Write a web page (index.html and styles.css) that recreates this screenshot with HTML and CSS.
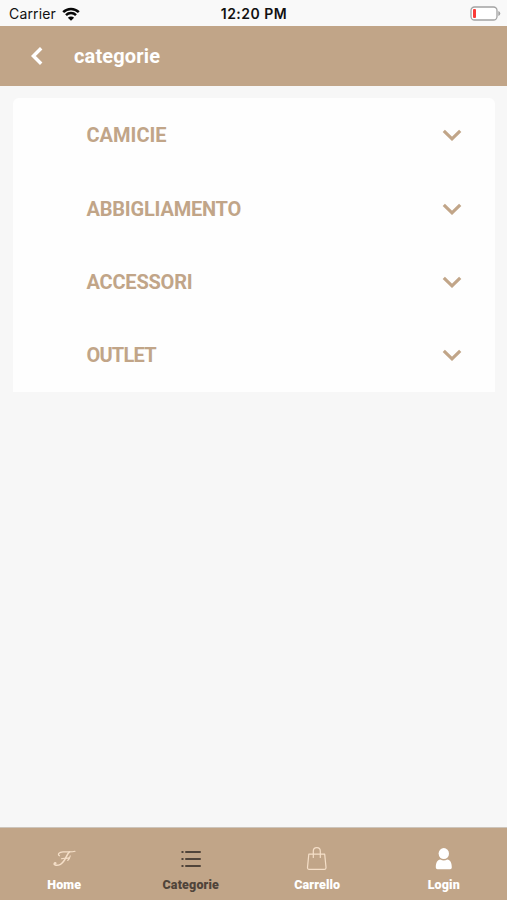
FILE: index.html
```html
<!DOCTYPE html>
<html lang="it">
<head>
    <meta charset="UTF-8">
    <meta name="viewport" content="width=device-width, initial-scale=1.0">
    <title>categorie</title>
    <link rel="stylesheet" href="styles.css">
</head>
<body>
    <div class="status-bar">
        <div class="carrier">
            <span>Carrier</span>
            <svg class="wifi" viewBox="0 0 18 14">
                <path d="M1.2 5.2a11 11 0 0 1 15.6 0M4 8.1a7.1 7.1 0 0 1 10 0" fill="none" stroke="#080808" stroke-width="2.5"/>
                <path d="M9 13.8L5.9 10.7a4.4 4.4 0 0 1 6.2 0z" fill="#080808"/>
            </svg>
        </div>
        <div class="clock">12:20 PM</div>
        <svg class="battery" viewBox="0 0 31 15">
            <rect x="1" y="1" width="26" height="13" rx="3.5" fill="#fff" stroke="#a3a3a3" stroke-width="1.3"/>
            <rect x="3" y="3" width="3" height="9" rx="1" fill="#fa3a36"/>
            <path d="M28.3 5v5q2-.7 2-2.5t-2-2.5z" fill="#a3a3a3"/>
        </svg>
    </div>

    <header class="header">
        <a href="#" class="back-link" aria-label="Indietro">
            <svg viewBox="0 0 12 18"><path d="M10.2 1.2L2.400 9l7.800 7.800"/></svg>
        </a>
        <h1>categorie</h1>
    </header>

    <main class="content">
        <ul class="category-list">
            <li class="category">
                <span>CAMICIE</span>
                <svg class="chevron" viewBox="0 0 20 12"><path d="M1.8 1.8L10 9.8l8.2-8"/></svg>
            </li>
            <li class="category">
                <span class="snug">ABBIGLIAMENTO</span>
                <svg class="chevron" viewBox="0 0 20 12"><path d="M1.8 1.8L10 9.8l8.2-8"/></svg>
            </li>
            <li class="category">
                <span class="snug">ACCESSORI</span>
                <svg class="chevron" viewBox="0 0 20 12"><path d="M1.8 1.8L10 9.8l8.2-8"/></svg>
            </li>
            <li class="category">
                <span class="tight">OUTLET</span>
                <svg class="chevron" viewBox="0 0 20 12"><path d="M1.8 1.8L10 9.8l8.2-8"/></svg>
            </li>
        </ul>
    </main>

    <nav class="tab-bar">
        <a href="#" class="tab">
            <svg viewBox="0 0 26 26" fill="none" stroke="#f5dfc8" stroke-linecap="round">
                <path d="M8.5 9.8C6.2 8.7 7.8 6 12 5.8c4.5-.2 8 .7 12-.5" stroke-width="1.2"/>
                <path d="M18.500 5.800C15.500 8 14.500 15.800 9.500 18.300c-3.200 1.600-7.200 1.200-6.200-1 .5-1 1.700-.7 1.500.1" stroke-width="1.500"/>
                <path d="M10.500 12.800c2.700-1.200 5 .4 8.200-1.300M19.200 9.800c-.3 2-1.200 3.600-2.500 4.700" stroke-width="1.100"/>
            </svg>
            <span>Home</span>
        </a>
        <a href="#" class="tab active">
            <svg viewBox="0 0 26 26" fill="none" stroke="#50443a" stroke-width="2">
                <path d="M8 6h14M8 13h14M8 20h14" stroke-linecap="round"/>
                <path d="M3.500 6h2M3.500 13h2M3.500 20h2"/>
            </svg>
            <span>Categorie</span>
        </a>
        <a href="#" class="tab">
            <svg viewBox="0 0 26 26" fill="none" stroke="#f5dfc8" stroke-width="1.200" stroke-linejoin="round">
                <path d="M4.800 8.200h15.900l1.300 13.200q.1 2-1.800 2H5.300q-1.900 0-1.800-2z"/>
                <path d="M9.300 11.500V5.200a3.500 3.500 0 0 1 7 0v6.300" stroke-linecap="round"/>
            </svg>
            <span>Carrello</span>
        </a>
        <a href="#" class="tab">
            <svg viewBox="0 0 26 26" fill="#fff">
                <ellipse cx="12.800" cy="7.600" rx="5.200" ry="5.500"/>
                <path d="M4.800 21.500c0-5 1.500-7.500 4.500-8q3.500 2 7 0c3 .5 4.500 3 4.500 8q0 1.700-1.700 1.700H6.500Q4.800 23.200 4.800 21.500z"/>
            </svg>
            <span>Login</span>
        </a>
    </nav>
</body>
</html>
```
FILE: styles.css
```css
* {
    margin: 0;
    padding: 0;
    box-sizing: border-box;
}

body {
    height: 100vh;
    display: flex;
    flex-direction: column;
    background: #f7f7f7;
    font-family: Roboto, 'Liberation Sans', sans-serif;
    overflow: hidden;
}

svg {
    display: block;
}

a {
    text-decoration: none;
}

.status-bar {
    height: 26px;
    flex: none;
    display: grid;
    grid-template-columns: 1fr auto 1fr;
    align-items: center;
    padding: 1px 6px 0 9px;
    background: #f9f9f9;
    color: #111;
    font-family: Inter, sans-serif;
    font-size: 14px;
}

.carrier {
    display: flex;
    align-items: center;
    gap: 6px;
    letter-spacing: 0.15px;
}

.wifi {
    width: 18px;
    height: 14px;
}

.clock {
    margin-right: 2px;
    font-weight: 600;
    letter-spacing: 0.5px;
}

.battery {
    width: 31px;
    height: 15px;
    justify-self: end;
}

.header {
    height: 60px;
    flex: none;
    display: flex;
    align-items: center;
    gap: 31px;
    padding: 0 31px;
    background: #c1a588;
    color: #fff;
}

.back-link svg {
    width: 12px;
    height: 18px;
    fill: none;
    stroke: #fff;
    stroke-width: 3.4;
}

h1 {
    font-size: 20px;
    font-weight: 700;
    letter-spacing: 0.15px;
}

.content {
    flex: 1;
    padding: 12px 12px 0 13px;
}

.category-list {
    list-style: none;
    background: #fefefe;
    border-radius: 6px 6px 0 0;
}

.category {
    height: 73.4px;
    display: flex;
    align-items: center;
    justify-content: space-between;
    padding: 1px 33px 0 73.5px;
    color: #c1a588;
    font-size: 20px;
    font-weight: 700;
}

.snug {
    letter-spacing: -0.2px;
}

.tight {
    letter-spacing: -0.8px;
}

.chevron {
    width: 20px;
    height: 12px;
    fill: none;
    stroke: #c1a588;
    stroke-width: 3.2;
}

.tab-bar {
    height: 73px;
    flex: none;
    display: grid;
    grid-template-columns: repeat(4, 1fr);
    padding-left: 1px;
    background: #c1a588;
    border-top: 1px solid #cdc5bc;
}

.tab {
    display: flex;
    flex-direction: column;
    align-items: center;
    gap: 5px;
    padding-top: 18px;
    color: #fff;
    font-size: 12.5px;
    font-weight: 900;
    line-height: 16px;
    letter-spacing: 0.15px;
}

.tab svg {
    width: 26px;
    height: 26px;
}

.tab.active {
    color: #50443a;
}
```
